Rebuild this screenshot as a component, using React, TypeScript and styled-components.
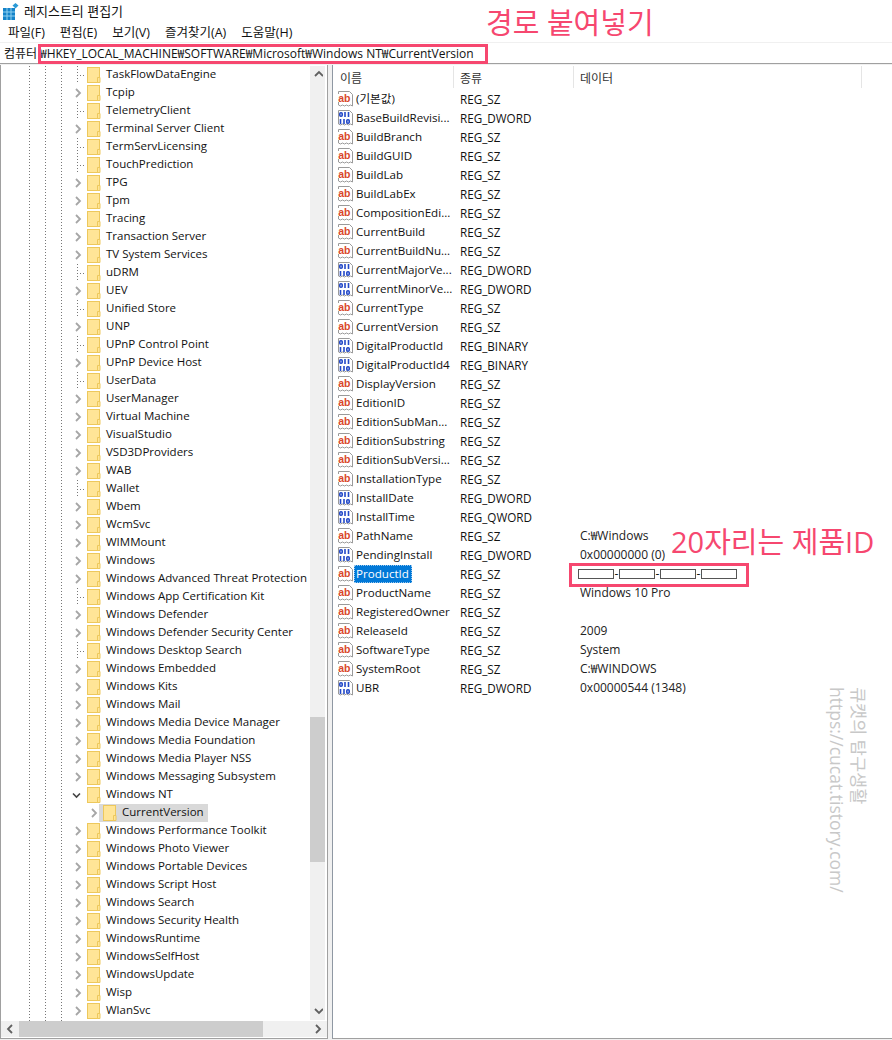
import React from 'react';
import styled, { createGlobalStyle } from 'styled-components';

const GlobalStyle = createGlobalStyle`
  html, body {
    margin: 0;
    padding: 0;
    background: #fff;
  }
  #root {
    width: 892px;
    height: 1040px;
  }
`;

const uiFont = `"Open Sans", "Noto Sans CJK KR", sans-serif`;
const pink = '#f6476f';

const Window = styled.div`
  position: relative;
  width: 892px;
  height: 1040px;
  overflow: hidden;
  display: flex;
  flex-direction: column;
  background: #f0f0f0;
  color: #111;
  font-family: ${uiFont};
  font-size: 12px;
  line-height: 18px;
`;

const TitleBar = styled.div`
  height: 22px;
  flex: none;
  display: flex;
  align-items: center;
  gap: 4px;
  padding: 0 0 1px 2px;
  box-sizing: border-box;
  background: #fff;
  font-size: 13px;
`;

const MenuBar = styled.div`
  height: 20px;
  flex: none;
  display: flex;
  align-items: center;
  gap: 15px;
  padding: 2px 0 0 8px;
  box-sizing: border-box;
  background: #fff;
  font-size: 12.5px;
`;

const AddressBar = styled.div`
  height: 21px;
  flex: none;
  margin-top: 1px;
  padding: 1px 0 0 4px;
  display: flex;
  align-items: center;
  background: #fff;
  border-bottom: 1px solid #a0a0a0;
  box-sizing: border-box;
  white-space: nowrap;
`;

const AddressLabel = styled.span`
  width: 36px;
  flex: none;
  overflow: hidden;
`;

const Panes = styled.div`
  flex: 1;
  min-height: 0;
  display: flex;
  gap: 4px;
  padding: 1px 0 1px 0;
`;

const TreePane = styled.div`
  width: 328px;
  flex: none;
  box-sizing: border-box;
  border: 1px solid #a0a0a0;
  border-width: 0 1px 1px 1px;
  padding-top: 1px;
  background: #fff;
  display: flex;
  flex-direction: column;
  font-size: 11.5px;
`;

const TreeBody = styled.div`
  flex: 1;
  min-height: 0;
  display: flex;
`;

const TreeRows = styled.div`
  flex: 1;
  min-width: 0;
  overflow: hidden;
  background-image:
    repeating-linear-gradient(to bottom, #777 0 1px, transparent 1px 3px),
    repeating-linear-gradient(to bottom, #777 0 1px, transparent 1px 3px),
    repeating-linear-gradient(to bottom, #777 0 1px, transparent 1px 3px);
  background-size: 1px 100%;
  background-position: 28px 0, 44px 0, 60px 0;
  background-repeat: no-repeat;
`;

const TreeRow = styled.div<{ $depth?: number }>`
  height: 18px;
  display: flex;
  align-items: center;
  padding-left: ${p => (p.$depth ? 88 : 72)}px;
  white-space: nowrap;
`;

const Twisty = styled.span`
  width: 11px;
  height: 18px;
  flex: none;
  display: flex;
  align-items: center;
  justify-content: flex-start;
  margin-right: 3px;
`;

const LeafStub = styled.span`
  display: block;
  width: 9px;
  height: 18px;
  margin-left: 4px;
  background-image:
    repeating-linear-gradient(to bottom, #777 0 1px, transparent 1px 3px),
    repeating-linear-gradient(to right, #777 0 1px, transparent 1px 3px);
  background-size: 1px 100%, 100% 1px;
  background-position: 0 0, 0 9px;
  background-repeat: no-repeat;
`;

const FolderSlot = styled.span<{ $selected?: boolean }>`
  display: flex;
  align-items: center;
  height: 18px;
  background: ${p => (p.$selected ? '#d9d9d9' : 'transparent')};
  padding: ${p => (p.$selected ? '0 4px' : '0')};
  margin-left: ${p => (p.$selected ? '-4px' : '0')};
`;

const FolderLabel = styled.span`
  margin: 0 0 2px 5px;
`;

const VScroll = styled.div`
  width: 15px;
  flex: none;
  margin: 0 2px 1px 0;
  background: #f0f0f0;
  display: flex;
  flex-direction: column;
  align-items: center;
`;

const ScrollEnd = styled.div`
  height: 17px;
  width: 100%;
  flex: none;
  display: flex;
  align-items: center;
  justify-content: center;
`;

const VTrack = styled.div`
  flex: 1;
  width: 100%;
  min-height: 0;
  padding-top: 634px;
  box-sizing: border-box;
`;

const VThumb = styled.div`
  height: 145px;
  width: 100%;
  background: #cdcdcd;
`;

const HScroll = styled.div`
  height: 16px;
  flex: none;
  display: flex;
  background: #f0f0f0;
  margin-bottom: 1px;
`;

const HEnd = styled.div`
  width: 18px;
  flex: none;
  display: flex;
  align-items: center;
  justify-content: center;
`;

const HTrack = styled.div`
  flex: 1;
`;

const HThumb = styled.div`
  width: 244px;
  height: 100%;
  background: #cdcdcd;
`;

const ListPane = styled.div`
  flex: 1;
  min-width: 0;
  border-left: 1px solid #8f98a3;
  border-bottom: 1px solid #a0a0a0;
  background: #fff;
`;

const ListHeader = styled.div`
  height: 24px;
  display: grid;
  grid-template-columns: 121px 120px 288px 1fr;
  color: #333;
`;

const HeaderCell = styled.div<{ $first?: boolean }>`
  height: 22px;
  padding: 3px 0 0 ${p => (p.$first ? 7 : 6)}px;
  box-sizing: border-box;
  border-right: 1px solid #e5e5e5;
  display: flex;
  align-items: center;
  margin-top: 1px;
`;

const ListRow = styled.div`
  height: 19px;
  display: grid;
  grid-template-columns: 121px 120px 1fr;
  align-items: center;
  white-space: nowrap;
`;

const NameCell = styled.div`
  display: flex;
  align-items: center;
  padding-left: 4px;
  gap: 1px;
  font-size: 11.6px;
`;

const NameText = styled.span<{ $selected?: boolean }>`
  padding: 0 1px;
  height: 18px;
  box-sizing: border-box;
  ${p =>
    p.$selected
      ? `background: #0078d7; color: #fff; outline: 1px dotted #9cc8ee; outline-offset: -1px; margin-left: -1px; padding: 0 3px 0 2px;`
      : ''}
`;

const TypeCell = styled.div`
  padding-left: 6px;
  font-size: 11.7px;
`;

const DataCell = styled.div`
  padding: 1px 0 0 6px;
  color: #222;
`;

const Redacted = styled.div`
  display: flex;
  align-items: center;
  padding-left: 4px;
`;

const RedactBlock = styled.span`
  width: 36px;
  height: 10px;
  box-sizing: border-box;
  background: #fff;
  border: 1px solid #555;
`;

const RedactDash = styled.span`
  width: 5px;
  text-align: center;
  line-height: 10px;
`;

const Highlight = styled.div<{ $x: number; $y: number; $w: number; $h: number }>`
  position: absolute;
  left: ${p => p.$x}px;
  top: ${p => p.$y}px;
  width: ${p => p.$w}px;
  height: ${p => p.$h}px;
  box-sizing: border-box;
  border: 3px solid ${pink};
`;

const Note = styled.div<{ $x: number; $y: number }>`
  position: absolute;
  left: ${p => p.$x}px;
  top: ${p => p.$y}px;
  color: ${pink};
  font-size: 29px;
  line-height: 32px;
  white-space: nowrap;
`;

const Watermark = styled.div`
  position: absolute;
  left: 826px;
  top: 687px;
  writing-mode: vertical-rl;
  text-orientation: sideways;
  color: #c8c8c8;
  font-size: 17.5px;
  line-height: 22px;
  white-space: nowrap;
`;

const AppIcon = () => (
  <svg width="18" height="18" viewBox="0 0 18 18">
    <rect x="1" y="6" width="12" height="12" fill="#1583c9" />
    <path d="M5 6v12M9 6v12M1 10h12M1 14h12" stroke="#8fd0f0" strokeWidth="1" />
    <path d="M13.5 1l3 2.5-3 3-3-3z" fill="#2a9ad6" />
  </svg>
);

const Folder = () => (
  <svg width="14" height="16" viewBox="0 0 14 16" style={{ flex: 'none' }}>
    <rect x="0.5" y="0.5" width="12" height="15" fill="#ffe597" stroke="#edc85c" />
    <path d="M10.5 15.5v-5h2.5v5z" fill="#ffe597" stroke="#edc85c" />
  </svg>
);

const Chevron = ({ open, dir = 'right', color = '#a6a6a6' }: { open?: boolean; dir?: string; color?: string }) => {
  if (open) {
    return (
      <svg width="9" height="7" viewBox="0 0 9 7" style={{ margin: '0 0 0 -1px' }}>
        <path d="M1 1.5l3.5 3.5L8 1.5" fill="none" stroke="#444" strokeWidth="1.6" />
      </svg>
    );
  }
  const paths: Record<string, string> = {
    right: 'M2 1l4 4-4 4',
    left: 'M6 1L2 5l4 4',
    up: 'M1 6l4-4 4 4',
    down: 'M1 2l4 4 4-4',
  };
  return (
    <svg width="9" height="10" viewBox="0 0 9 10" style={{ margin: '0 0 0 1px' }}>
      <path d={paths[dir]} fill="none" stroke={color} strokeWidth="1.8" />
    </svg>
  );
};

const Page = ({ children }: { children: React.ReactNode }) => (
  <svg width="17" height="16" viewBox="0 0 17 16" style={{ flex: 'none' }}>
    <path
      d="M1.5.5h11l3 3v11.5l-2-1-2 1-2-1-2 1-2-1-2 1-2-1z"
      fill="#fff"
      stroke="#9a9a9a"
    />
    {children}
  </svg>
);

const StringIcon = () => (
  <Page>
    <rect x="1" y="3" width="13" height="8" fill="#fff" />
    <text x="1.2" y="10.5" fontSize="10.5" fontWeight="700" fontFamily="Liberation Sans, sans-serif" fill="#d9472b">
      ab
    </text>
  </Page>
);

const BinaryIcon = () => (
  <Page>
    <g fill="none" stroke="#2349c8" strokeWidth="1.6">
      <rect x="2.8" y="2.8" width="2.4" height="3.4" rx="1" />
      <path d="M8 2v5M11.5 2v5" />
      <path d="M3.5 9v5M7 9v5" />
      <rect x="9.8" y="9.8" width="2.4" height="3.4" rx="1" />
    </g>
  </Page>
);

const tree: [string, boolean][] = [
  ['TaskFlowDataEngine', false],
  ['Tcpip', true],
  ['TelemetryClient', false],
  ['Terminal Server Client', true],
  ['TermServLicensing', false],
  ['TouchPrediction', false],
  ['TPG', true],
  ['Tpm', true],
  ['Tracing', true],
  ['Transaction Server', true],
  ['TV System Services', true],
  ['uDRM', false],
  ['UEV', true],
  ['Unified Store', false],
  ['UNP', true],
  ['UPnP Control Point', false],
  ['UPnP Device Host', true],
  ['UserData', false],
  ['UserManager', true],
  ['Virtual Machine', true],
  ['VisualStudio', true],
  ['VSD3DProviders', true],
  ['WAB', true],
  ['Wallet', false],
  ['Wbem', true],
  ['WcmSvc', true],
  ['WIMMount', true],
  ['Windows', true],
  ['Windows Advanced Threat Protection', true],
  ['Windows App Certification Kit', false],
  ['Windows Defender', true],
  ['Windows Defender Security Center', true],
  ['Windows Desktop Search', false],
  ['Windows Embedded', true],
  ['Windows Kits', true],
  ['Windows Mail', true],
  ['Windows Media Device Manager', true],
  ['Windows Media Foundation', true],
  ['Windows Media Player NSS', true],
  ['Windows Messaging Subsystem', true],
];

const treeAfter: string[] = [
  'Windows Performance Toolkit',
  'Windows Photo Viewer',
  'Windows Portable Devices',
  'Windows Script Host',
  'Windows Search',
  'Windows Security Health',
  'WindowsRuntime',
  'WindowsSelfHost',
  'WindowsUpdate',
  'Wisp',
  'WlanSvc',
];

const values: { name: string; type: string; data?: string; bin?: boolean }[] = [
  { name: '(기본값)', type: 'REG_SZ' },
  { name: 'BaseBuildRevisi...', type: 'REG_DWORD', bin: true },
  { name: 'BuildBranch', type: 'REG_SZ' },
  { name: 'BuildGUID', type: 'REG_SZ' },
  { name: 'BuildLab', type: 'REG_SZ' },
  { name: 'BuildLabEx', type: 'REG_SZ' },
  { name: 'CompositionEdi...', type: 'REG_SZ' },
  { name: 'CurrentBuild', type: 'REG_SZ' },
  { name: 'CurrentBuildNu...', type: 'REG_SZ' },
  { name: 'CurrentMajorVe...', type: 'REG_DWORD', bin: true },
  { name: 'CurrentMinorVe...', type: 'REG_DWORD', bin: true },
  { name: 'CurrentType', type: 'REG_SZ' },
  { name: 'CurrentVersion', type: 'REG_SZ' },
  { name: 'DigitalProductId', type: 'REG_BINARY', bin: true },
  { name: 'DigitalProductId4', type: 'REG_BINARY', bin: true },
  { name: 'DisplayVersion', type: 'REG_SZ' },
  { name: 'EditionID', type: 'REG_SZ' },
  { name: 'EditionSubMan...', type: 'REG_SZ' },
  { name: 'EditionSubstring', type: 'REG_SZ' },
  { name: 'EditionSubVersi...', type: 'REG_SZ' },
  { name: 'InstallationType', type: 'REG_SZ' },
  { name: 'InstallDate', type: 'REG_DWORD', bin: true },
  { name: 'InstallTime', type: 'REG_QWORD', bin: true },
  { name: 'PathName', type: 'REG_SZ', data: 'C:₩Windows' },
  { name: 'PendingInstall', type: 'REG_DWORD', data: '0x00000000 (0)', bin: true },
  { name: 'ProductId', type: 'REG_SZ' },
  { name: 'ProductName', type: 'REG_SZ', data: 'Windows 10 Pro' },
  { name: 'RegisteredOwner', type: 'REG_SZ' },
  { name: 'ReleaseId', type: 'REG_SZ', data: '2009' },
  { name: 'SoftwareType', type: 'REG_SZ', data: 'System' },
  { name: 'SystemRoot', type: 'REG_SZ', data: 'C:₩WINDOWS' },
  { name: 'UBR', type: 'REG_DWORD', data: '0x00000544 (1348)', bin: true },
];

const menus = ['파일(F)', '편집(E)', '보기(V)', '즐겨찾기(A)', '도움말(H)'];

const FolderRow = ({ label, branch }: { label: string; branch: boolean }) => (
  <TreeRow>
    <Twisty>{branch ? <Chevron /> : <LeafStub />}</Twisty>
    <Folder />
    <FolderLabel>{label}</FolderLabel>
  </TreeRow>
);

export default function App() {
  return (
    <Window>
      <GlobalStyle />
      <TitleBar>
        <AppIcon />
        <span>레지스트리 편집기</span>
      </TitleBar>
      <MenuBar>
        {menus.map(m => (
          <span key={m}>{m}</span>
        ))}
      </MenuBar>
      <AddressBar>
        <AddressLabel>컴퓨터</AddressLabel>
        <span>₩HKEY_LOCAL_MACHINE₩SOFTWARE₩Microsoft₩Windows NT₩CurrentVersion</span>
      </AddressBar>
      <Panes>
        <TreePane>
          <TreeBody>
            <TreeRows>
              {tree.map(([label, branch]) => (
                <FolderRow key={label} label={label} branch={branch} />
              ))}
              <TreeRow>
                <Twisty>
                  <Chevron open />
                </Twisty>
                <Folder />
                <FolderLabel>Windows NT</FolderLabel>
              </TreeRow>
              <TreeRow $depth={1}>
                <Twisty>
                  <Chevron />
                </Twisty>
                <FolderSlot $selected>
                  <Folder />
                  <FolderLabel>CurrentVersion</FolderLabel>
                </FolderSlot>
              </TreeRow>
              {treeAfter.map(label => (
                <FolderRow key={label} label={label} branch />
              ))}
            </TreeRows>
            <VScroll>
              <ScrollEnd>
                <Chevron dir="up" color="#606060" />
              </ScrollEnd>
              <VTrack>
                <VThumb />
              </VTrack>
              <ScrollEnd>
                <Chevron dir="down" color="#606060" />
              </ScrollEnd>
            </VScroll>
          </TreeBody>
          <HScroll>
            <HEnd>
              <Chevron dir="left" color="#606060" />
            </HEnd>
            <HTrack>
              <HThumb />
            </HTrack>
            <HEnd>
              <Chevron dir="right" color="#606060" />
            </HEnd>
          </HScroll>
        </TreePane>
        <ListPane>
          <ListHeader>
            <HeaderCell $first>이름</HeaderCell>
            <HeaderCell>종류</HeaderCell>
            <HeaderCell>데이터</HeaderCell>
          </ListHeader>
          {values.map(v => (
            <ListRow key={v.name}>
              <NameCell>
                {v.bin ? <BinaryIcon /> : <StringIcon />}
                <NameText $selected={v.name === 'ProductId'}>{v.name}</NameText>
              </NameCell>
              <TypeCell>{v.type}</TypeCell>
              {v.name === 'ProductId' ? (
                <Redacted>
                  <RedactBlock />
                  <RedactDash>-</RedactDash>
                  <RedactBlock />
                  <RedactDash>-</RedactDash>
                  <RedactBlock />
                  <RedactDash>-</RedactDash>
                  <RedactBlock />
                </Redacted>
              ) : (
                <DataCell>{v.data}</DataCell>
              )}
            </ListRow>
          ))}
        </ListPane>
      </Panes>
      <Highlight $x={38} $y={44} $w={450} $h={20} />
      <Highlight $x={569} $y={563} $w={180} $h={24} />
      <Note $x={486} $y={7}>경로 붙여넣기</Note>
      <Note $x={671} $y={526}>20자리는 제품ID</Note>
      <Watermark>
        큐캣의 탐구생활
        <br />
        https://cucat.tistory.com/
      </Watermark>
    </Window>
  );
}
